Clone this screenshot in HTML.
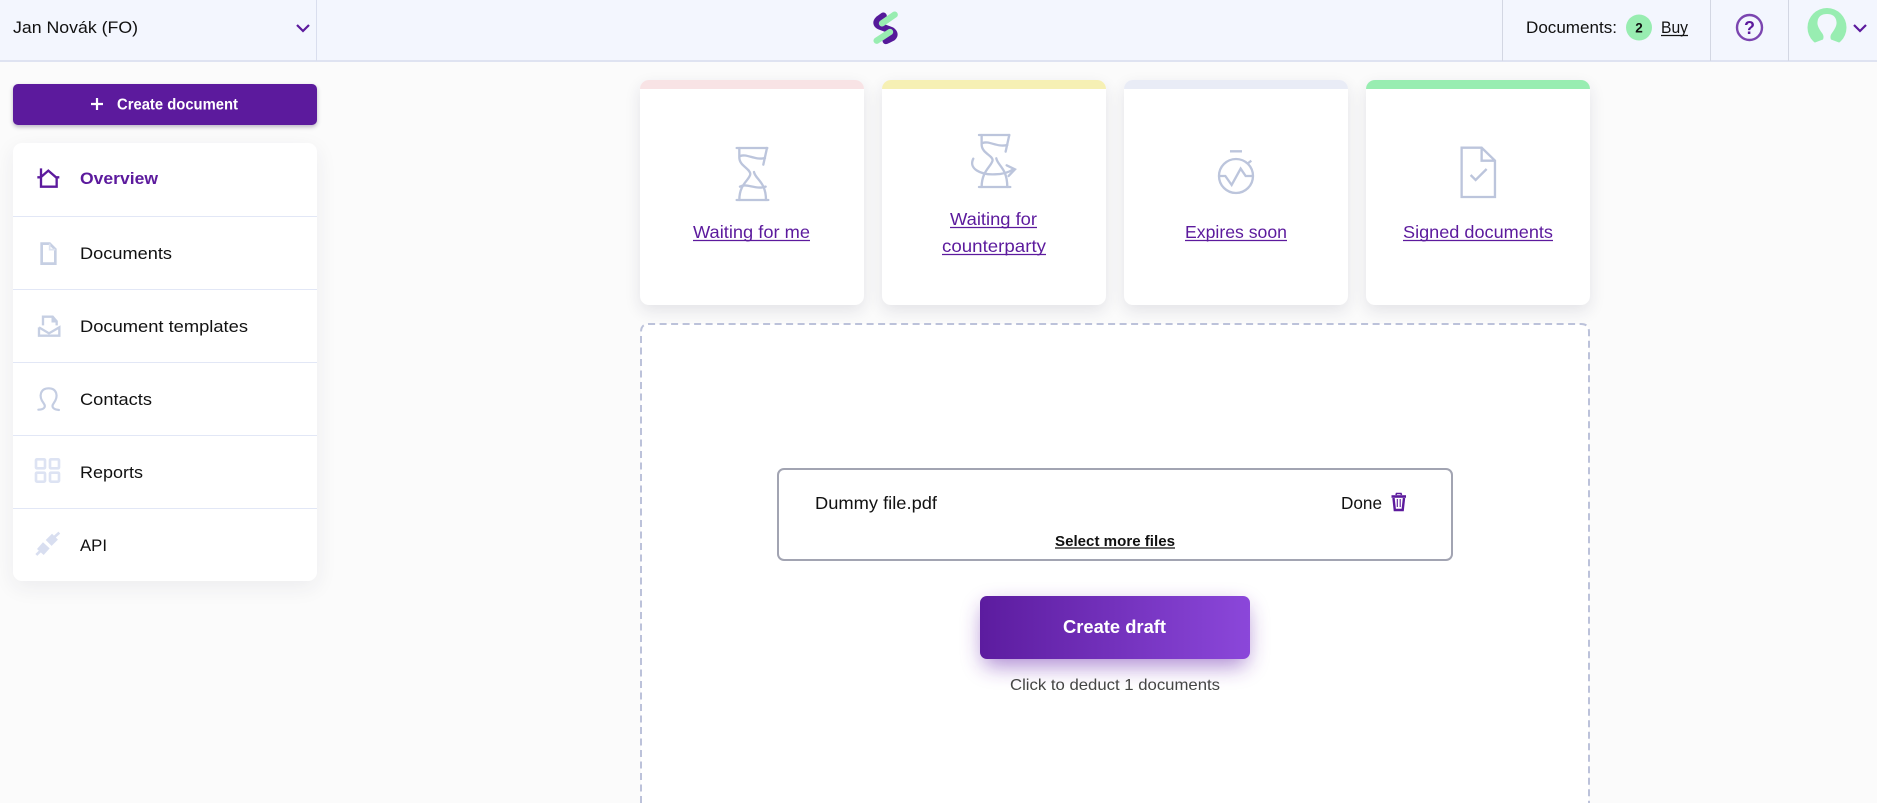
<!DOCTYPE html>
<html><head><meta charset="utf-8"><title>Overview</title>
<style>
html,body{margin:0;padding:0;width:1877px;height:803px;overflow:hidden;background:#fbfbfb}
div{position:absolute;box-sizing:border-box}
svg{position:absolute;left:0;top:0;display:block}
text{font-family:"Liberation Sans",sans-serif;fill:#111}
.card{width:224px;height:225px;top:80px;background:#fff;border-radius:9px;box-shadow:0 6px 16px rgba(40,40,70,.11);overflow:hidden}
.bar{left:0;top:0;width:100%;height:9px}
.n{font-size:17px}
.l{font-size:17.5px;fill:#5c1a9d}
</style></head><body>
<div style="left:0;top:0;width:1877px;height:62px;background:#f3f6fe;border-bottom:2px solid #dfe3f1"></div>
<div style="left:316px;top:0;width:1px;height:61px;background:#d9deee"></div>
<div style="left:1502px;top:0;width:1px;height:61px;background:#d3d7e3"></div>
<div style="left:1710px;top:0;width:1px;height:61px;background:#d3d7e3"></div>
<div style="left:1788px;top:0;width:1px;height:61px;background:#d3d7e3"></div>

<div style="left:13px;top:84px;width:304px;height:41px;background:#5c1a9d;border-radius:5px;box-shadow:0 2px 4px rgba(40,20,70,.3)"></div>
<div style="left:13px;top:143px;width:304px;height:438px;background:#fff;border-radius:9px;box-shadow:0 6px 22px rgba(40,40,70,.07)"></div>
<div style="left:13px;top:216px;width:304px;height:1px;background:#e2e7f6"></div>
<div style="left:13px;top:289px;width:304px;height:1px;background:#e2e7f6"></div>
<div style="left:13px;top:362px;width:304px;height:1px;background:#e2e7f6"></div>
<div style="left:13px;top:435px;width:304px;height:1px;background:#e2e7f6"></div>
<div style="left:13px;top:508px;width:304px;height:1px;background:#e2e7f6"></div>

<div class="card" style="left:640px"><div class="bar" style="background:#f8e3e5"></div></div>
<div class="card" style="left:882px"><div class="bar" style="background:#f6f0b4"></div></div>
<div class="card" style="left:1124px"><div class="bar" style="background:#e9ecf6"></div></div>
<div class="card" style="left:1366px"><div class="bar" style="background:#98edb1"></div></div>

<svg width="1877" height="803" viewBox="0 0 1877 803" xmlns="http://www.w3.org/2000/svg">
<rect x="641" y="330" width="948" height="473" fill="#fff"/>
<path d="M641 803 V332 Q641 324 649 324 H1581 Q1589 324 1589 332 V803" fill="#fff" stroke="#bcc2da" stroke-width="2" stroke-dasharray="7 4.5"/>
<rect x="778" y="469" width="674" height="91" rx="6" fill="#fff" stroke="#a2a4b2" stroke-width="2"/>
<defs>
<linearGradient id="g" x1="0" x2="1" y1="0" y2="0"><stop offset="0" stop-color="#5c1c9f"/><stop offset="1" stop-color="#8b47da"/></linearGradient>
<filter id="s" x="-30%" y="-60%" width="160%" height="240%"><feGaussianBlur stdDeviation="11"/></filter>
</defs>
<rect x="983" y="606" width="264" height="60" rx="8" fill="#6a2aae" opacity=".55" filter="url(#s)"/>
<rect x="980" y="596" width="270" height="63" rx="7" fill="url(#g)"/>

<!-- header text -->
<text class="n" x="13" y="33" font-size="17.5" textLength="125" lengthAdjust="spacingAndGlyphs">Jan Novák (FO)</text>
<path d="M297 25l6 6 6-6" fill="none" stroke="#5c1a9d" stroke-width="2.2"/>
<text x="1526" y="33" font-size="16.5" textLength="91" lengthAdjust="spacingAndGlyphs">Documents:</text>
<circle cx="1639" cy="27.5" r="13" fill="#98edb1"/>
<text x="1639" y="32.5" font-size="13.5" font-weight="700" text-anchor="middle">2</text>
<text x="1661" y="33" font-size="16.5" textLength="27" lengthAdjust="spacingAndGlyphs">Buy</text>
<line x1="1661" x2="1688" y1="35.5" y2="35.5" stroke="#111" stroke-width="1.2"/>
<circle cx="1749.5" cy="27.5" r="12.5" fill="none" stroke="#7b45b0" stroke-width="2.4"/>
<text x="1749.5" y="34" font-size="18" font-weight="700" text-anchor="middle" style="fill:#5c1a9d">?</text>
<circle cx="1827" cy="27.5" r="19.5" fill="#98edb1"/>
<path d="M1806 46 L1815 42.5 L1823 39.5 C1824 37 1823.5 35 1822 33 C1819 29 1817 25 1817.5 22 C1818 16 1822 14 1827 14 C1832 14 1836 16 1836.5 22 C1837 25 1835 29 1832 33 C1830.5 35 1830 37 1831 39.5 L1839 42.5 L1848 46 V50 H1806Z" fill="#f3f6fe"/>
<path d="M1854 25l6 6 6-6" fill="none" stroke="#5c1a9d" stroke-width="2.2"/>
<!-- logo -->
<g transform="translate(840,0) scale(.3333)" fill="none" stroke-linecap="round" stroke-linejoin="round">
<path d="M130 48 L116 58 Q104 70 118 78 L155 92 Q168 102 158 112 L138 122" stroke="#551a9a" stroke-width="21"/>
<path d="M164 44 L126 70" stroke="#98edb1" stroke-width="19"/>
<path d="M150 96 L110 122" stroke="#98edb1" stroke-width="19"/>
</g>

<!-- sidebar -->
<path d="M91 104h12M97 98v12" stroke="#fff" stroke-width="2.2" fill="none"/>
<text x="117" y="109.5" font-size="15.5" font-weight="700" style="fill:#fff" textLength="121" lengthAdjust="spacingAndGlyphs">Create document</text>
<text x="80" y="184" font-size="17" font-weight="700" style="fill:#5c1a9d" textLength="78" lengthAdjust="spacingAndGlyphs">Overview</text>
<text class="n" x="80" y="259" textLength="92" lengthAdjust="spacingAndGlyphs">Documents</text>
<text class="n" x="80" y="332" textLength="168" lengthAdjust="spacingAndGlyphs">Document templates</text>
<text class="n" x="80" y="405" textLength="72" lengthAdjust="spacingAndGlyphs">Contacts</text>
<text class="n" x="80" y="478" textLength="63" lengthAdjust="spacingAndGlyphs">Reports</text>
<text class="n" x="80" y="551" textLength="27" lengthAdjust="spacingAndGlyphs">API</text>

<g transform="scale(.3333)" fill="none" stroke-linejoin="miter">
<path d="M112 532 H122 L145 512 L168 532 H178 M123 505 V560 H170 V532" stroke="#5c1a9d" stroke-width="7"/>
<path d="M125 731 H149 L166 748 V791 H125Z" stroke="#c6cfe3" stroke-width="8"/>
<path d="M149 731 V749 H166" stroke="#dde3f0" stroke-width="5"/>
</g>
<g transform="translate(0,300) scale(.3333)" fill="none">
<path d="M117 82 V107 H178 V82 L147 100 L117 82 M129 76 V50 H158 L170 64 V76 M158 50 V64 H170" stroke="#c6cfe3" stroke-width="7"/>
<path d="M115 329 C130 329 140 322 131 310 C114 288 122 265 146 265 C170 265 177 288 161 310 C152 322 162 329 177 330" stroke="#c4cde2" stroke-width="6.5" stroke-linecap="round"/>
<g stroke="#dde3f3" stroke-width="8">
<rect x="108" y="478" width="27" height="27" rx="3"/><rect x="150" y="478" width="27" height="27" rx="3"/>
<rect x="108" y="518" width="27" height="27" rx="3"/><rect x="150" y="518" width="27" height="27" rx="3"/>
</g>
<g stroke="#d8def0" stroke-linecap="butt">
<path d="M121 756 L139 736" stroke-width="27"/>
<path d="M146 729 L165 710" stroke-width="25"/>
<path d="M109 765 L122 752" stroke-width="8"/>
<path d="M160 714 L178 698" stroke-width="8"/>
</g>
</g>

<!-- cards icons -->
<g transform="translate(630,70) scale(.3333)" fill="none" stroke="#bcc5dc" stroke-width="7" stroke-linecap="round">
<path d="M320 234 H412 M320 390 H415"/>
<path d="M328 234 V262 C328 288 360 295 361 312 C360 330 328 340 328 390"/>
<path d="M411 234 L400 284"/>
<path d="M372 306 C376 328 408 335 408 390"/>
<path d="M331 258 C350 250 375 272 405 264"/>
<path d="M330 350 C350 338 375 360 407 350"/>
<path d="M1047 195 H1138 M1047 351 H1141"/>
<path d="M1055 195 V223 C1055 249 1087 256 1088 270 C1087 288 1055 301 1055 351"/>
<path d="M1138 195 L1127 245"/>
<path d="M1099 265 C1103 287 1132 294 1132 351"/>
<path d="M1058 219 C1077 211 1102 233 1132 225"/>
<path d="M1030 266 C1015 295 1050 315 1095 313 C1120 313 1135 308 1150 298 M1130 286 L1155 298 L1136 318"/>
</g>
<g transform="translate(1110,70) scale(.3333)" fill="none" stroke="#bcc5dc" stroke-width="7">
<path d="M360 244 H396 M411 282 L424 272"/>
<circle cx="378" cy="318" r="51"/>
<path d="M326 318 H346 L365 345 L392 296 L407 318 H430"/>
<path d="M1055 233 H1115 L1155 272 V381 H1055Z M1115 233 V272 H1155"/>
<path d="M1082 315 L1097 330 L1130 297"/>
</g>

<!-- cards text -->
<text class="l" x="693" y="238" textLength="117" lengthAdjust="spacingAndGlyphs">Waiting for me</text>
<line x1="693" x2="810" y1="240.5" y2="240.5" stroke="#5c1a9d" stroke-width="1.2"/>
<text class="l" x="950" y="225" textLength="87" lengthAdjust="spacingAndGlyphs">Waiting for</text>
<line x1="950" x2="1037" y1="227.5" y2="227.5" stroke="#5c1a9d" stroke-width="1.2"/>
<text class="l" x="942" y="252" textLength="104" lengthAdjust="spacingAndGlyphs">counterparty</text>
<line x1="942" x2="1046" y1="254.5" y2="254.5" stroke="#5c1a9d" stroke-width="1.2"/>
<text class="l" x="1185" y="238" textLength="102" lengthAdjust="spacingAndGlyphs">Expires soon</text>
<line x1="1185" x2="1287" y1="240.5" y2="240.5" stroke="#5c1a9d" stroke-width="1.2"/>
<text class="l" x="1403" y="238" textLength="150" lengthAdjust="spacingAndGlyphs">Signed documents</text>
<line x1="1403" x2="1553" y1="240.5" y2="240.5" stroke="#5c1a9d" stroke-width="1.2"/>

<!-- upload -->
<text x="815" y="509" font-size="17.5" textLength="122" lengthAdjust="spacingAndGlyphs">Dummy file.pdf</text>
<text x="1341" y="509" font-size="17.5" textLength="41" lengthAdjust="spacingAndGlyphs">Done</text>
<g fill="none" stroke="#5c1a9d">
<path d="M1391.5 496.5 H1406" stroke-width="2.6"/>
<path d="M1396 495 L1396.5 493.5 H1401 L1401.5 495" stroke-width="1.6"/>
<path d="M1393.5 498 L1394.8 510 H1402.7 L1404 498" stroke-width="2.4"/>
<path d="M1397.3 499 V507 M1400.2 499 V507" stroke-width="1.1"/>
</g>
<text x="1055" y="546" font-size="15" font-weight="700" textLength="120" lengthAdjust="spacingAndGlyphs">Select more files</text>
<line x1="1055" x2="1175" y1="548" y2="548" stroke="#111" stroke-width="1.3"/>
<text x="1063" y="633" font-size="18" font-weight="700" style="fill:#fff" textLength="103" lengthAdjust="spacingAndGlyphs">Create draft</text>
<text x="1010" y="690" font-size="16" style="fill:#444" textLength="210" lengthAdjust="spacingAndGlyphs">Click to deduct 1 documents</text>
</svg>
</body></html>
